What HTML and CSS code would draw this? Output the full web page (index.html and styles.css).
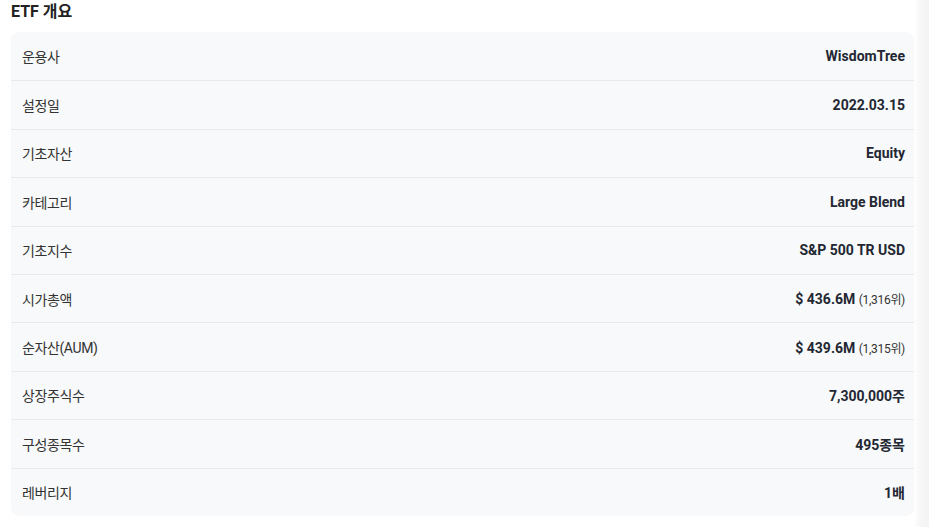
FILE: index.html
```html
<!DOCTYPE html>
<html lang="ko">
<head>
<meta charset="utf-8">
<link rel="stylesheet" href="styles.css">
</head>
<body>
<div class="page">
  <main class="main">
    <h2 class="title">ETF 개요</h2>
    <div class="card">
      <div class="row"><span class="label">운용사</span><span class="value">WisdomTree</span></div>
      <div class="row"><span class="label">설정일</span><span class="value">2022.03.15</span></div>
      <div class="row"><span class="label">기초자산</span><span class="value">Equity</span></div>
      <div class="row"><span class="label">카테고리</span><span class="value">Large Blend</span></div>
      <div class="row"><span class="label">기초지수</span><span class="value">S&amp;P 500 TR USD</span></div>
      <div class="row"><span class="label">시가총액</span><span class="value">$ 436.6M <span class="rank">(1,316위)</span></span></div>
      <div class="row"><span class="label">순자산(AUM)</span><span class="value">$ 439.6M <span class="rank">(1,315위)</span></span></div>
      <div class="row"><span class="label">상장주식수</span><span class="value">7,300,000주</span></div>
      <div class="row"><span class="label">구성종목수</span><span class="value">495종목</span></div>
      <div class="row"><span class="label">레버리지</span><span class="value">1배</span></div>
    </div>
  </main>
  <div class="edge"></div>
</div>
</body>
</html>
```

FILE: styles.css
```css
* { box-sizing: border-box; }
html, body { margin: 0; padding: 0; background: #fff; }
body {
  font-family: Roboto, "Noto Sans CJK KR", sans-serif;
  color: #333;
}
.page {
  display: flex;
  width: 929px;
  height: 527px;
  overflow: hidden;
}
.main {
  flex: 1;
  padding: 0 0 0 11px;
}
.edge {
  width: 20px;
  background: linear-gradient(to right, #ffffff 0%, #f7f7f7 40%, #f3f3f3 100%);
}
.title {
  margin: 0;
  height: 32px;
  padding-top: 1px;
  font-size: 16px;
  line-height: 22px;
  font-weight: 700;
  color: #222;
}
.card {
  width: 903px;
  background: #f8f9fa;
  border-radius: 8px;
  overflow: hidden;
}
.row {
  height: 48.4px;
  display: flex;
  align-items: center;
  justify-content: space-between;
  padding: 0 9px 0 11px;
  border-top: 1px solid #e7e9eb;
}
.row:first-child { border-top: none; }
.label {
  font-size: 14px;
  color: #333;
  letter-spacing: -0.4px;
}
.value {
  font-size: 14px;
  font-weight: 700;
  color: #222733;
}
.rank {
  font-size: 12px;
  font-weight: 400;
  color: #333;
  letter-spacing: -0.3px;
}
```
